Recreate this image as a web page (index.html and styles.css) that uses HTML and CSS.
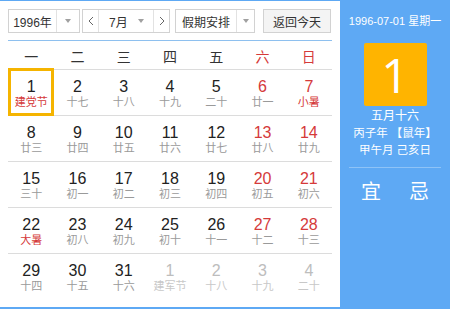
FILE: index.html
```html
<!DOCTYPE html>
<html lang="zh-CN">
<head>
<meta charset="utf-8">
<title>万年历</title>
<link rel="stylesheet" href="styles.css">
</head>
<body>
<div class="cal">
  <div class="main">
    <div class="toolbar">
      <div class="select year">
        <span class="val">1996年</span><span class="drop"><i class="tri"></i></span>
      </div>
      <div class="month">
        <span class="nav prev"><svg width="6" height="10" viewBox="0 0 6 10"><polyline points="5,1 1,5 5,9" fill="none" stroke="#666" stroke-width="1"/></svg></span>
        <span class="mval"><span>7月</span><i class="tri"></i></span>
        <span class="nav next"><svg width="6" height="10" viewBox="0 0 6 10"><polyline points="1,1 5,5 1,9" fill="none" stroke="#666" stroke-width="1"/></svg></span>
      </div>
      <div class="select holiday">
        <span class="val">假期安排</span><span class="drop"><i class="tri"></i></span>
      </div>
      <div class="btn">返回今天</div>
    </div>
    <div class="grid">
      <div class="head">
        <span>一</span><span>二</span><span>三</span><span>四</span><span>五</span><span class="red">六</span><span class="red">日</span>
      </div>
      <div class="row">
        <div class="cell sel"><b>1</b><em class="fest">建党节</em></div>
        <div class="cell"><b>2</b><em>十七</em></div>
        <div class="cell"><b>3</b><em>十八</em></div>
        <div class="cell"><b>4</b><em>十九</em></div>
        <div class="cell"><b>5</b><em>二十</em></div>
        <div class="cell we"><b>6</b><em>廿一</em></div>
        <div class="cell we"><b>7</b><em class="fest">小暑</em></div>
      </div>
      <div class="row">
        <div class="cell"><b>8</b><em>廿三</em></div>
        <div class="cell"><b>9</b><em>廿四</em></div>
        <div class="cell"><b>10</b><em>廿五</em></div>
        <div class="cell"><b>11</b><em>廿六</em></div>
        <div class="cell"><b>12</b><em>廿七</em></div>
        <div class="cell we"><b>13</b><em>廿八</em></div>
        <div class="cell we"><b>14</b><em>廿九</em></div>
      </div>
      <div class="row">
        <div class="cell"><b>15</b><em>三十</em></div>
        <div class="cell"><b>16</b><em>初一</em></div>
        <div class="cell"><b>17</b><em>初二</em></div>
        <div class="cell"><b>18</b><em>初三</em></div>
        <div class="cell"><b>19</b><em>初四</em></div>
        <div class="cell we"><b>20</b><em>初五</em></div>
        <div class="cell we"><b>21</b><em>初六</em></div>
      </div>
      <div class="row">
        <div class="cell"><b>22</b><em class="fest">大暑</em></div>
        <div class="cell"><b>23</b><em>初八</em></div>
        <div class="cell"><b>24</b><em>初九</em></div>
        <div class="cell"><b>25</b><em>初十</em></div>
        <div class="cell"><b>26</b><em>十一</em></div>
        <div class="cell we"><b>27</b><em>十二</em></div>
        <div class="cell we"><b>28</b><em>十三</em></div>
      </div>
      <div class="row last">
        <div class="cell"><b>29</b><em>十四</em></div>
        <div class="cell"><b>30</b><em>十五</em></div>
        <div class="cell"><b>31</b><em>十六</em></div>
        <div class="cell other"><b>1</b><em>建军节</em></div>
        <div class="cell other"><b>2</b><em>十八</em></div>
        <div class="cell other"><b>3</b><em>十九</em></div>
        <div class="cell other"><b>4</b><em>二十</em></div>
      </div>
    </div>
  </div>
  <div class="side">
    <div class="date">1996-07-01 星期一</div>
    <div class="day">1</div>
    <div class="lunar">五月十六</div>
    <div class="info">丙子年 【鼠年】</div>
    <div class="info">甲午月 己亥日</div>
    <div class="sep"></div>
    <div class="yiji"><span>宜</span><span>忌</span></div>
  </div>
</div>
</body>
</html>
```
FILE: styles.css
```css
* { box-sizing: border-box; }
html, body { margin: 0; padding: 0; background: #fff; }
body {
  font-family: "Liberation Sans", "Noto Sans CJK SC", sans-serif;
  color: #333;
}
.cal {
  display: flex;
  width: 450px;
  height: 309px;
  border-top: 1px solid #5ea9f4;
  border-bottom: 2px solid #5ea9f4;
}
.main {
  width: 340px;
  padding: 8px 8px 0 8px;
  background: #fff;
}
.toolbar {
  display: flex;
  height: 24px;
  font-size: 12px;
}
.select, .month, .btn {
  display: flex;
  height: 24px;
  border: 1px solid #d2d2d2;
  align-items: stretch;
}
.tri {
  display: inline-block;
  width: 0;
  height: 0;
  border-left: 3px solid transparent;
  border-right: 3px solid transparent;
  border-top: 4px solid #a0a0a0;
}
.val {
  display: flex;
  align-items: center;
  justify-content: center;
}
.drop {
  display: flex;
  align-items: center;
  justify-content: center;
  border-left: 1px solid #e2e2e2;
}
.year { width: 72px; }
.year .val { width: 47px; }
.year .drop { flex: 1; }
.month { width: 88px; margin-left: 2px; }
.nav {
  width: 16px;
  display: flex;
  align-items: center;
  justify-content: center;
}
.prev { border-right: 1px solid #e2e2e2; }
.next { border-left: 1px solid #e2e2e2; }
.mval {
  flex: 1;
  display: flex;
  align-items: center;
  justify-content: space-between;
  padding: 0 9px 0 10px;
}
.holiday { width: 80px; margin-left: 5px; }
.holiday .val { width: 60px; }
.holiday .drop { flex: 1; }
.btn {
  width: 68px;
  margin-left: 8px;
  background: #f4f4f4;
  align-items: center;
  justify-content: center;
}
.grid {
  margin-top: 7px;
  border-top: 1px solid #8ec0ef;
  width: 324px;
}
.head {
  display: grid;
  grid-template-columns: repeat(7, 1fr);
  height: 29px;
  border-bottom: 1px solid #dcdcdc;
  font-size: 14px;
  align-items: center;
  text-align: center;
  padding-top: 1px;
}
.red { color: #d53a3a; }
.row {
  display: grid;
  grid-template-columns: repeat(7, 1fr);
  height: 46px;
  border-bottom: 1px solid #dcdcdc;
}
.row.last { border-bottom: none; height: 45px; }
.cell {
  position: relative;
  display: flex;
  flex-direction: column;
  align-items: center;
  padding-top: 8px;
}
.cell b {
  font-weight: normal;
  font-size: 16px;
  line-height: 18px;
  color: #222;
}
.cell em {
  font-style: normal;
  font-size: 11px;
  line-height: 13px;
  color: #9a9a9a;
}
.cell em.fest { color: #d53a3a; }
.cell.we b { color: #d53a3a; }
.cell.other b { color: #bdbdbd; }
.cell.other em { color: #c8c8c8; }
.cell.sel::after {
  content: "";
  position: absolute;
  top: -2px;
  left: 0;
  right: 0;
  bottom: -1px;
  border: 3px solid #f5b400;
}
.side {
  width: 110px;
  background: #5ea9f4;
  color: #fff;
  display: flex;
  flex-direction: column;
  align-items: center;
  padding-top: 13px;
}
.date {
  font-size: 11px;
  line-height: 14px;
}
.day {
  margin-top: 15px;
  width: 63px;
  height: 63px;
  background: #ffb400;
  border-radius: 2px;
  display: flex;
  align-items: center;
  justify-content: center;
  font-family: "Open Sans", "Liberation Sans", sans-serif;
  font-weight: 400;
  font-size: 48px;
  line-height: 1;
}
.lunar {
  margin-top: 2px;
  font-size: 12px;
  line-height: 17px;
}
.info {
  font-size: 11.5px;
  line-height: 17px;
}
.sep {
  margin-top: 8px;
  width: 92px;
  height: 1px;
  background: #8ec3f7;
}
.yiji {
  margin-top: 12px;
  display: flex;
  gap: 28px;
  font-size: 20px;
  line-height: 24px;
}
```
